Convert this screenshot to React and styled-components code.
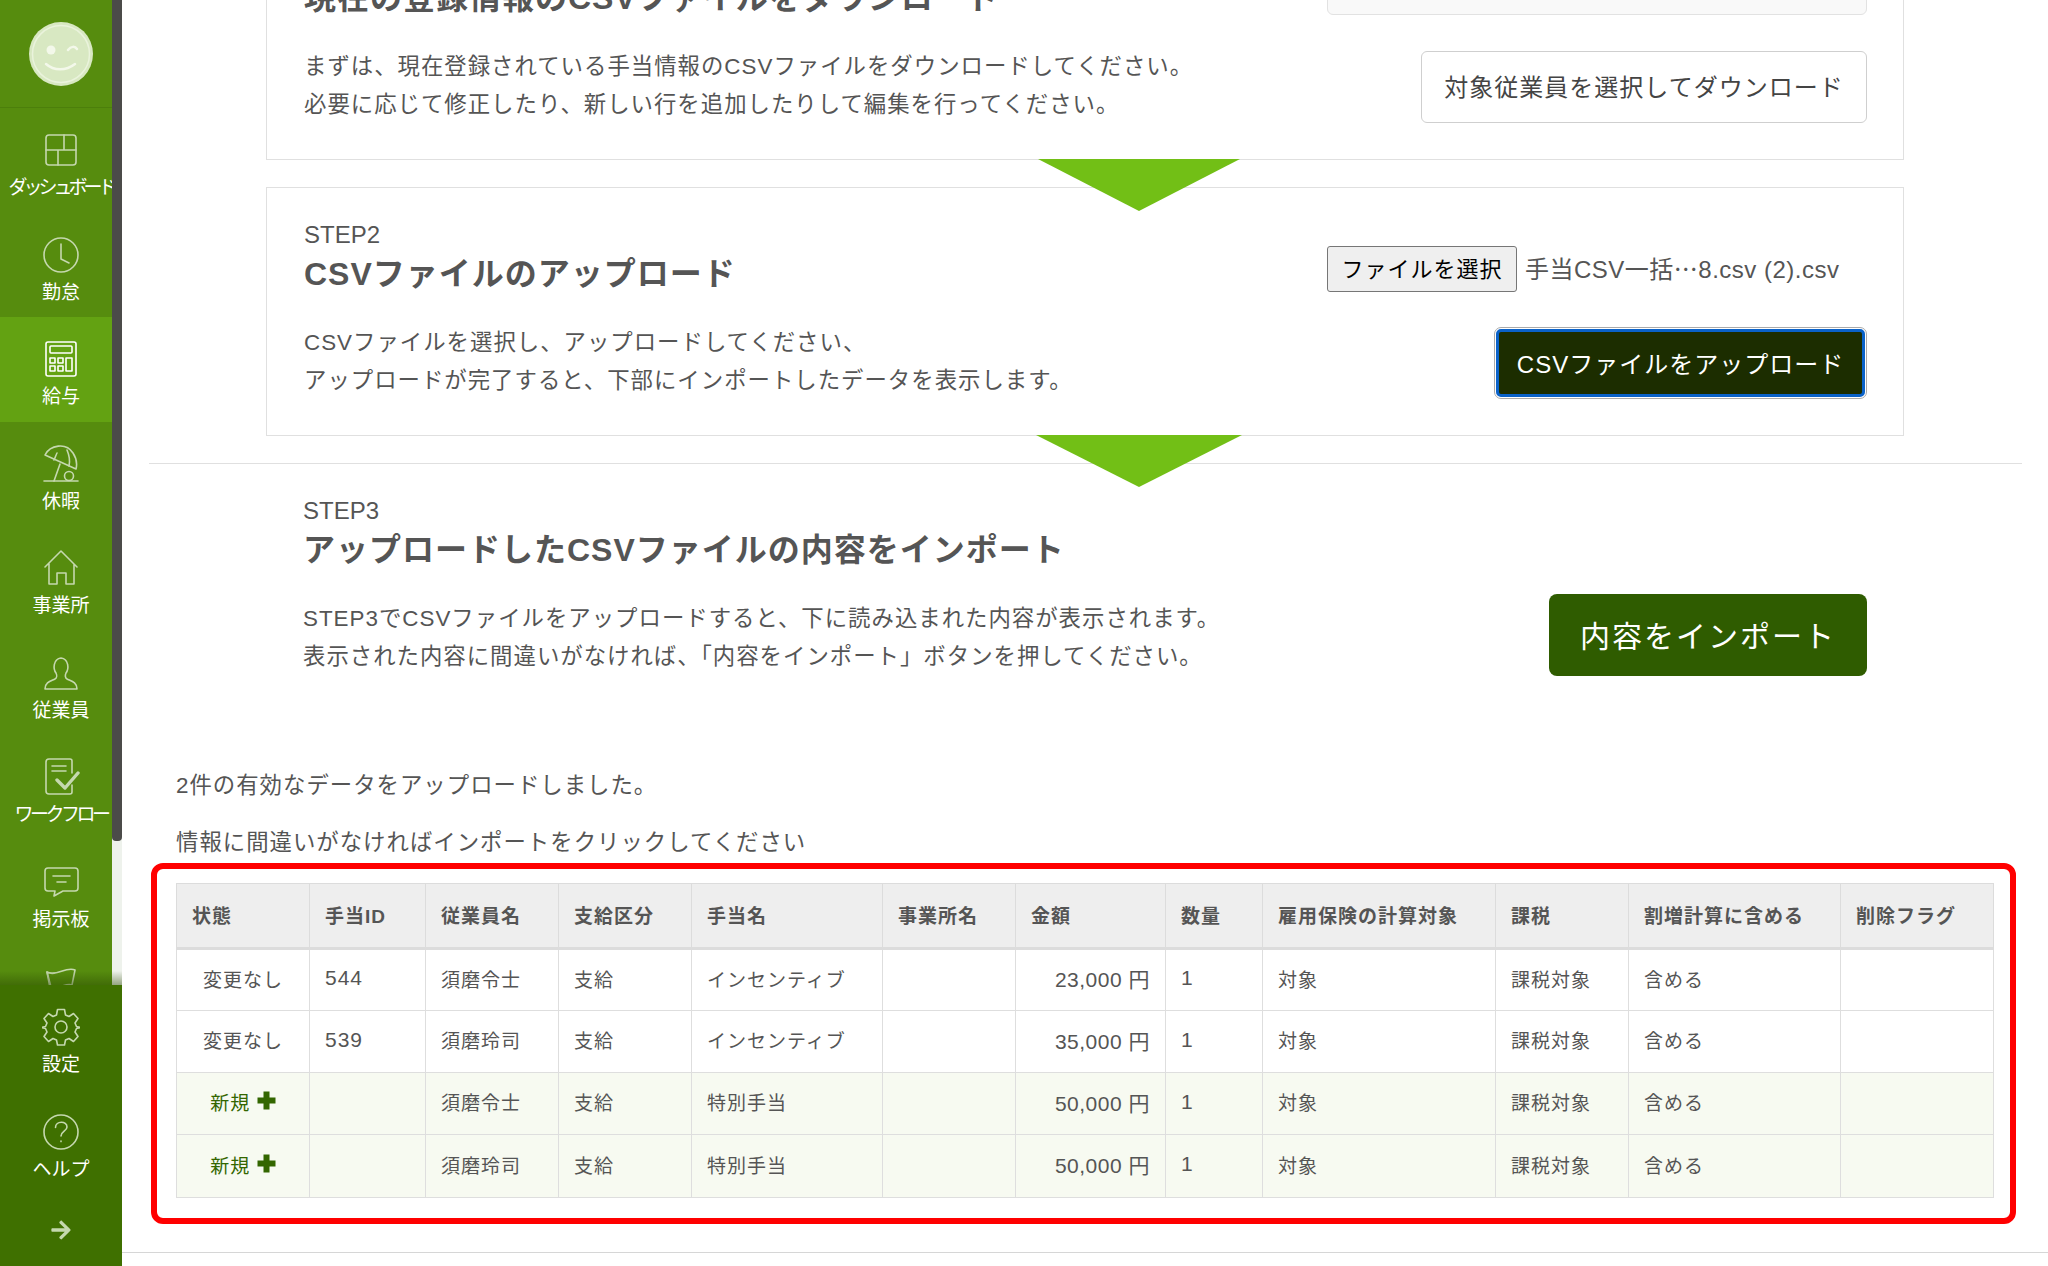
import React from "react";
import styled, { createGlobalStyle } from "styled-components";
import { FaArrowRight } from "react-icons/fa";

const GlobalStyle = createGlobalStyle`
  html, body {
    margin: 0;
    padding: 0;
    background: #fff;
    overflow: hidden;
  }
  * {
    box-sizing: border-box;
  }
  body {
    font-family: "Liberation Sans", "Noto Sans CJK JP", sans-serif;
    color: #555;
  }
`;

const Icon = ({ children, w = 38, h = 38, vb = "0 0 38 38" }) => (
  <svg width={w} height={h} viewBox={vb} fill="none" stroke="#c5d8ae" strokeWidth="1.6" strokeLinecap="round" strokeLinejoin="round">
    {children}
  </svg>
);

const DashboardIcon = () => (
  <Icon>
    <rect x="4" y="4" width="30" height="30" rx="3" />
    <path d="M4 19h30M22 4v15M16 19v15" />
  </Icon>
);

const ClockIcon = () => (
  <Icon>
    <circle cx="19" cy="19" r="17" />
    <path d="M19 8v15l8 4" />
  </Icon>
);

const CalcIcon = () => (
  <Icon>
    <g stroke="#fff">
      <rect x="4" y="2" width="30" height="34" rx="2" />
      <rect x="8" y="6" width="22" height="7" rx="1" />
      <rect x="8" y="18" width="5" height="5" />
      <rect x="16" y="18" width="5" height="5" />
      <rect x="24" y="18" width="6" height="13" />
      <rect x="8" y="26" width="5" height="5" />
      <rect x="16" y="26" width="5" height="5" />
    </g>
  </Icon>
);

const UmbrellaIcon = () => (
  <Icon>
    <path d="M2 36h34" />
    <path d="M3 10 C8 0 24 -3 31 8 C35 14 35 20 34 24 Z" />
    <path d="M15 8 C14 10 13 13 12 15M25 5 C28 12 28 17 27 21" />
    <path d="M18 19 L12 36" />
    <circle cx="27" cy="31" r="4.5" />
  </Icon>
);

const HomeIcon = () => (
  <Icon>
    <path d="M3 18 L19 2 L35 18M7 15v20h8V24h9v11h8V15" />
  </Icon>
);

const PersonIcon = () => (
  <Icon>
    <path d="M3 35 C3 28 9 27 13 25 C15 24 15 21 14 19 C11 15 11 5 19 4 C27 5 27 15 24 19 C23 21 23 24 25 25 C29 27 35 28 35 35 Z" />
  </Icon>
);

const FlowIcon = () => (
  <Icon>
    <path d="M30 15V3a2 2 0 0 0-2-2H7a3 3 0 0 0-3 3v29a3 3 0 0 0 3 3h21a2 2 0 0 0 2-2v-7" />
    <path d="M10 8h14M10 13h14" />
    <path d="M15 22l8 8 13-15" strokeWidth="3.4" />
  </Icon>
);

const ChatIcon = () => (
  <Icon>
    <path d="M6 5h27a3 3 0 0 1 3 3v17a3 3 0 0 1-3 3H21l-9 5 1-5H6a3 3 0 0 1-3-3V8a3 3 0 0 1 3-3z" />
    <path d="M11 13h17M15 19h9" />
  </Icon>
);

const FlagIcon = () => (
  <Icon>
    <path d="M5 5 C14 10 24 -1 33 3 L30 18 C24 15 14 24 9 20 Z" />
    <path d="M5 5l6 32" />
  </Icon>
);

const GearIcon = () => (
  <Icon>
    <path d="M15.500 1.500h7l1 5.500 3.500 1.500 4.500-3 4.500 5-3 4.500 1.500 3.500 5 1v0l-5 1-1.500 3.500 3 4.500-4.500 5-4.500-3-3.500 1.500-1 5h-7l-1-5-3.500-1.500-4.500 3-4.500-5 3-4.500-1.500-3.500-5-1v0l5-1 1.500-3.500-3-4.500 4.500-5 4.500 3 3.500-1.500z" />
    <circle cx="19" cy="19" r="6" />
  </Icon>
);

const HelpIcon = () => (
  <Icon>
    <circle cx="19" cy="19" r="17" />
    <path d="M13.500 14.500 C13.500 7.500 25 7.500 25 14 C25 18 19 18.500 19 23" />
    <path d="M19 28v.6" />
  </Icon>
);

const SmileLogo = () => (
  <svg width="66" height="66" viewBox="0 0 66 66" fill="none">
    <circle cx="33" cy="33" r="32" fill="#d8e8c2" />
    <circle cx="33" cy="33" r="28.500" stroke="#eaf3dc" strokeWidth="1.500" />
    <circle cx="23" cy="29" r="4.500" fill="#f3f8ea" />
    <path d="M40 29 C43 25 47 25 49 28" stroke="#f3f8ea" strokeWidth="2.500" strokeLinecap="round" />
    <path d="M18 43 C26 50 38 50 47 43" stroke="#f3f8ea" strokeWidth="2.500" strokeLinecap="round" />
  </svg>
);

const PlusMark = () => (
  <svg width="19" height="19" viewBox="0 0 19 19" fill="#336600">
    <path d="M6.500 0.500h6v6h6v6h-6v6h-6v-6h-6v-6h6z" />
  </svg>
);

const navItems = [
  { label: "ダッシュボード", icon: <DashboardIcon />, tight: 4 },
  { label: "勤怠", icon: <ClockIcon /> },
  { label: "給与", icon: <CalcIcon />, active: true },
  { label: "休暇", icon: <UmbrellaIcon /> },
  { label: "事業所", icon: <HomeIcon /> },
  { label: "従業員", icon: <PersonIcon /> },
  { label: "ワークフロー", icon: <FlowIcon />, tight: 3.5 },
  { label: "掲示板", icon: <ChatIcon /> },
  { label: "", icon: <FlagIcon /> },
];

const columns = [
  { title: "状態", width: 133 },
  { title: "手当ID", width: 116 },
  { title: "従業員名", width: 133 },
  { title: "支給区分", width: 133 },
  { title: "手当名", width: 191 },
  { title: "事業所名", width: 133 },
  { title: "金額", width: 150 },
  { title: "数量", width: 97 },
  { title: "雇用保険の計算対象", width: 233 },
  { title: "課税", width: 133 },
  { title: "割増計算に含める", width: 212 },
  { title: "削除フラグ", width: 153 },
];

const rows = [
  { id: "544", name: "須磨令士", allowance: "インセンティブ", amount: "23,000 円" },
  { id: "539", name: "須磨玲司", allowance: "インセンティブ", amount: "35,000 円" },
  { isNew: true, id: "", name: "須磨令士", allowance: "特別手当", amount: "50,000 円" },
  { isNew: true, id: "", name: "須磨玲司", allowance: "特別手当", amount: "50,000 円" },
];

const App = () => {
  return (
    <>
      <GlobalStyle />
      <Page>
        <Sidebar>
          <NavArea>
            <LogoBox>
              <SmileLogo />
            </LogoBox>
            {navItems.map((item, i) => (
              <NavItem key={i} $active={item.active}>
                <IconBox>{item.icon}</IconBox>
                <NavLabel $tight={item.tight}>{item.label}</NavLabel>
              </NavItem>
            ))}
            <ScrollTrack>
              <ScrollThumb />
            </ScrollTrack>
          </NavArea>
          <SideFooter>
            <NavItem>
              <IconBox>
                <GearIcon />
              </IconBox>
              <NavLabel>設定</NavLabel>
            </NavItem>
            <NavItem>
              <IconBox>
                <HelpIcon />
              </IconBox>
              <NavLabel>ヘルプ</NavLabel>
            </NavItem>
            <ArrowBox>
              <FaArrowRight />
            </ArrowBox>
          </SideFooter>
        </Sidebar>

        <Main>
          <Scrolled>
            <StepBox>
              <StepText>
                <StepLabel>STEP1</StepLabel>
                <StepTitle>現在の登録情報のCSVファイルをダウンロード</StepTitle>
                <StepDesc>
                  まずは、現在登録されている手当情報のCSVファイルをダウンロードしてください。
                  <br />
                  必要に応じて修正したり、新しい行を追加したりして編集を行ってください。
                </StepDesc>
              </StepText>
              <Actions $gap={36} $top={57}>
                <EmptySelect />
                <DownloadButton>対象従業員を選択してダウンロード</DownloadButton>
              </Actions>
              <Arrow $half={101} />
            </StepBox>

            <StepBox $mt={27}>
              <StepText>
                <StepLabel>STEP2</StepLabel>
                <StepTitle>CSVファイルのアップロード</StepTitle>
                <StepDesc>
                  CSVファイルを選択し、アップロードしてください、
                  <br />
                  アップロードが完了すると、下部にインポートしたデータを表示します。
                </StepDesc>
              </StepText>
              <Actions $gap={35} $top={58}>
                <FileRow>
                  <FileButton>ファイルを選択</FileButton>
                  <FileName>手当CSV一括⋯8.csv (2).csv</FileName>
                </FileRow>
                <UploadButton>CSVファイルをアップロード</UploadButton>
              </Actions>
              <Arrow $half={103} />
            </StepBox>

            <ImportSection>
              <StepText>
                <StepLabel>STEP3</StepLabel>
                <StepTitle>アップロードしたCSVファイルの内容をインポート</StepTitle>
                <StepDesc>
                  STEP3でCSVファイルをアップロードすると、下に読み込まれた内容が表示されます。
                  <br />
                  表示された内容に間違いがなければ、「内容をインポート」ボタンを押してください。
                </StepDesc>
              </StepText>
              <ImportButton>内容をインポート</ImportButton>
            </ImportSection>

            <Message $mt={91}>2件の有効なデータをアップロードしました。</Message>
            <Message $mt={19}>情報に間違いがなければインポートをクリックしてください</Message>

            <Highlight>
              <DataTable>
                <thead>
                  <tr>
                    {columns.map((col) => (
                      <Th key={col.title} $width={col.width}>
                        {col.title}
                      </Th>
                    ))}
                  </tr>
                </thead>
                <tbody>
                  {rows.map((row, i) => (
                    <Row key={i} $isNew={row.isNew}>
                      <Td $center>
                        {row.isNew ? (
                          <NewBadge>
                            新規 <PlusMark />
                          </NewBadge>
                        ) : (
                          "変更なし"
                        )}
                      </Td>
                      <Td $latin>{row.id}</Td>
                      <Td>{row.name}</Td>
                      <Td>支給</Td>
                      <Td>{row.allowance}</Td>
                      <Td />
                      <Td $right $latin>
                        {row.amount}
                      </Td>
                      <Td $latin>1</Td>
                      <Td>対象</Td>
                      <Td>課税対象</Td>
                      <Td>含める</Td>
                      <Td />
                    </Row>
                  ))}
                </tbody>
              </DataTable>
            </Highlight>

            <BottomRule />
          </Scrolled>
        </Main>
      </Page>
    </>
  );
};

export default App;

const Page = styled.div`
  display: flex;
  width: 2048px;
  height: 1266px;
  overflow: hidden;
`;

const Sidebar = styled.aside`
  display: flex;
  flex-direction: column;
  flex: 0 0 122px;
  height: 1266px;
`;

const NavArea = styled.nav`
  position: relative;
  height: 985px;
  overflow: hidden;
  background: #568c0e;

  &::after {
    content: "";
    position: absolute;
    left: 0;
    right: 0;
    bottom: 0;
    height: 14px;
    background: linear-gradient(rgba(40, 70, 0, 0), rgba(40, 70, 0, 0.45));
  }
`;

const LogoBox = styled.div`
  display: flex;
  justify-content: center;
  height: 108px;
  padding-top: 21px;
  border-bottom: 1px solid #4c7f0b;
`;

const NavItem = styled.div`
  display: flex;
  flex-direction: column;
  align-items: center;
  height: 104.5px;
  padding-top: 24px;
  background: ${(p) => (p.$active ? "#63a212" : "transparent")};
`;

const IconBox = styled.div`
  display: flex;
  align-items: center;
  justify-content: center;
  height: 36px;
`;

const NavLabel = styled.div`
  margin-top: 7px;
  height: 26px;
  line-height: 26px;
  font-size: 19px;
  color: #fff;
  white-space: nowrap;
  letter-spacing: ${(p) => (p.$tight ? `-${p.$tight}px` : "0")};
`;

const ScrollTrack = styled.div`
  position: absolute;
  top: 0;
  bottom: 0;
  right: 0;
  width: 10px;
  background: #eef2ec;
`;

const ScrollThumb = styled.div`
  height: 841px;
  background: #4b4b49;
  border-radius: 0 0 4px 4px;
`;

const SideFooter = styled.div`
  flex: 1;
  background: #3f7000;
`;

const ArrowBox = styled.div`
  display: flex;
  justify-content: center;
  padding-top: 25px;
  font-size: 22px;
  color: #c5d8ae;
`;

const Main = styled.main`
  flex: 1;
  height: 1266px;
  overflow: hidden;
`;

const Scrolled = styled.div`
  margin-top: -89px;
`;

const StepBox = styled.section`
  position: relative;
  display: flex;
  justify-content: space-between;
  height: 249px;
  margin: ${(p) => p.$mt || 0}px 144px 0;
  padding: 0 36px 0 37px;
  border: 1px solid #e0e0e0;
`;

const StepText = styled.div`
  padding-top: 32px;
`;

const StepLabel = styled.div`
  font-size: 24px;
  line-height: 30px;
`;

const StepTitle = styled.h2`
  margin: 0;
  font-size: 32px;
  line-height: 48px;
  font-weight: 700;
  letter-spacing: 1px;
  color: #555;
`;

const StepDesc = styled.p`
  margin: 26px 0 0;
  font-size: 22.4px;
  line-height: 38px;
  letter-spacing: 1px;
  white-space: nowrap;
`;

const Actions = styled.div`
  display: flex;
  flex-direction: column;
  align-items: flex-end;
  gap: ${(p) => p.$gap}px;
  width: 540px;
  padding-top: ${(p) => p.$top}px;
`;

const Arrow = styled.div`
  position: absolute;
  z-index: 2;
  left: 872px;
  top: 100%;
  width: 0;
  height: 0;
  transform: translateX(-50%);
  border-top: 52px solid #72bf16;
  border-left: ${(p) => p.$half}px solid transparent;
  border-right: ${(p) => p.$half}px solid transparent;
`;

const EmptySelect = styled.div`
  width: 540px;
  height: 46px;
  background: #f9f9f9;
  border: 1px solid #e2e2e2;
  border-radius: 6px;
`;

const DownloadButton = styled.button`
  width: 446px;
  height: 72px;
  padding: 0 0 4px;
  background: #fff;
  border: 1px solid #cfcfcf;
  border-radius: 6px;
  font-family: inherit;
  font-size: 24px;
  letter-spacing: 1px;
  color: #444;
`;

const FileRow = styled.div`
  display: flex;
  align-items: center;
  gap: 8px;
  width: 100%;
  height: 46px;
`;

const FileButton = styled.button`
  width: 190px;
  height: 46px;
  padding: 0 0 4px;
  background: #efefef;
  border: 1px solid #767676;
  border-radius: 3px;
  font-family: inherit;
  font-size: 22px;
  letter-spacing: 1px;
  color: #000;
`;

const FileName = styled.span`
  font-size: 24px;
  letter-spacing: 0.5px;
  white-space: nowrap;
  padding-bottom: 4px;
`;

const UploadButton = styled.button`
  width: 369px;
  height: 68px;
  margin: 2px 2px 2px 0;
  padding: 0 0 2px;
  background: #1c2d00;
  border: 3px solid #0a62c9;
  border-radius: 5px;
  outline: 1px solid #aaa;
  outline-offset: 1px;
  font-family: inherit;
  font-size: 24px;
  letter-spacing: 1px;
  color: #fff;
`;

const ImportSection = styled.section`
  display: flex;
  justify-content: space-between;
  align-items: flex-end;
  margin: 27px 26px 0 27px;
  padding: 0 155px 0 154px;
  border-top: 1px solid #e0e0e0;
`;

const ImportButton = styled.button`
  width: 318px;
  height: 82px;
  padding: 0 0 3px;
  margin-bottom: 0;
  background: #2f5c00;
  border: 0;
  border-radius: 8px;
  font-family: inherit;
  font-size: 30px;
  letter-spacing: 2px;
  color: #fff;
`;

const Message = styled.p`
  margin: ${(p) => p.$mt}px 0 0 54px;
  font-size: 22.4px;
  line-height: 38px;
  letter-spacing: 1px;
`;

const Highlight = styled.div`
  margin: 1px 32px 0 29px;
  padding: 14px 16px 20px 19px;
  border: 6px solid #ff0000;
  border-radius: 12px;
`;

const DataTable = styled.table`
  width: 1818px;
  table-layout: fixed;
  border-collapse: collapse;
  font-size: 19px;
`;

const Th = styled.th`
  width: ${(p) => p.$width}px;
  height: 65px;
  padding: 0 15px 2px;
  text-align: left;
  font-weight: 700;
  font-size: 19px;
  letter-spacing: 1px;
  color: #555;
  background: #eee;
  border: 1px solid #dcdcdc;
  border-bottom: 3px solid #dcdcdc;
  white-space: nowrap;
`;

const Row = styled.tr`
  height: 62px;
  background: ${(p) => (p.$isNew ? "#f7faf1" : "#fff")};

  &:last-child {
    height: 63px;
  }
`;

const Td = styled.td`
  padding: 0 15px 4px;
  border: 1px solid #dedede;
  font-size: ${(p) => (p.$latin ? "21px" : "19px")};
  letter-spacing: ${(p) => (p.$right ? "0.5px" : "1px")};
  white-space: nowrap;
  text-align: ${(p) => (p.$center ? "center" : p.$right ? "right" : "left")};
`;

const NewBadge = styled.span`
  color: #336600;

  svg {
    vertical-align: 0;
  }
`;

const BottomRule = styled.div`
  margin-top: 28px;
  border-top: 1px solid #d6d6d6;
`;
